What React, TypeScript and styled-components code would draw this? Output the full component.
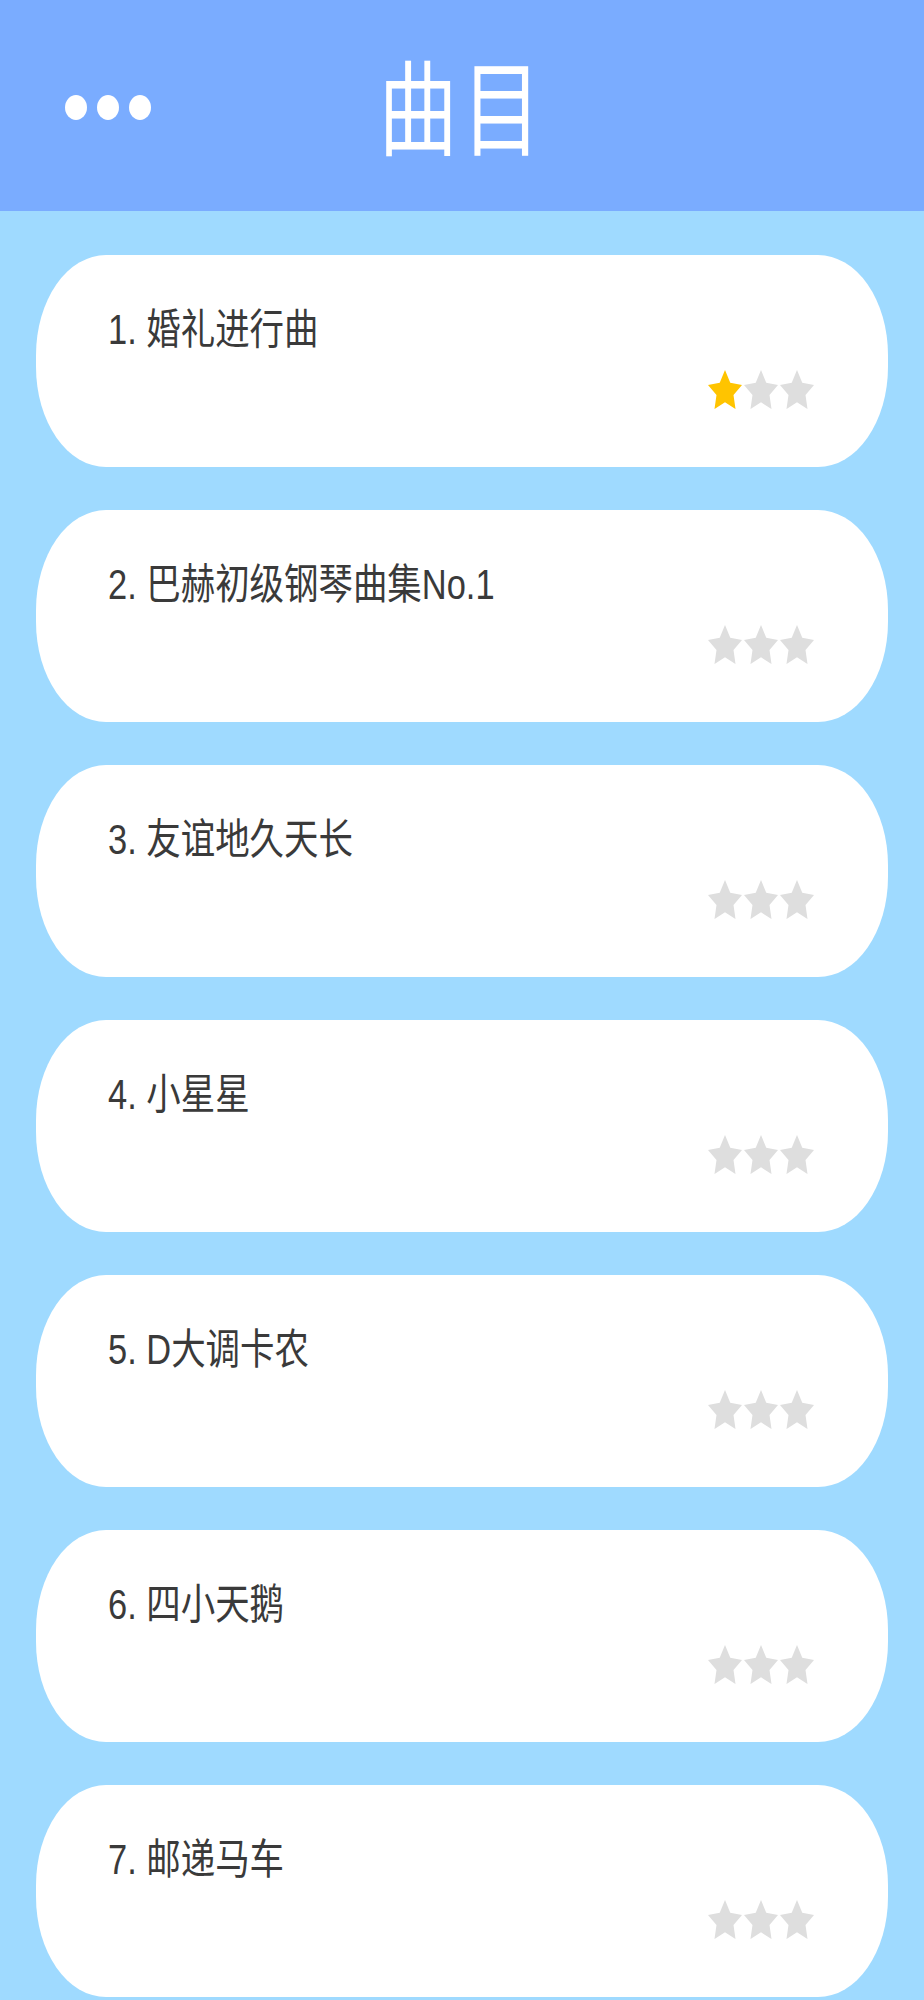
import styled, { createGlobalStyle } from "styled-components";

const songs = [
  { title: "1. 婚礼进行曲", stars: 1 },
  { title: "2. 巴赫初级钢琴曲集No.1", stars: 0 },
  { title: "3. 友谊地久天长", stars: 0 },
  { title: "4. 小星星", stars: 0 },
  { title: "5. D大调卡农", stars: 0 },
  { title: "6. 四小天鹅", stars: 0 },
  { title: "7. 邮递马车", stars: 0 },
];

const GlobalStyle = createGlobalStyle`
  body {
    margin: 0;
    background: #9fdaff;
    font-family: "Liberation Sans", "Noto Sans CJK SC", sans-serif;
  }
`;

export default function App() {
  return (
    <Page>
      <GlobalStyle />
      <Header>
        <Dots>
          <Dot />
          <Dot />
          <Dot />
        </Dots>
        <Title>
          <span>曲目</span>
        </Title>
        <div />
      </Header>
      <List>
        {songs.map((s) => (
          <Card key={s.title}>
            <SongName>
              <span>{s.title}</span>
            </SongName>
            <Stars>
              {[0, 1, 2].map((i) => (
                <Star key={i} $on={i < s.stars} />
              ))}
            </Stars>
          </Card>
        ))}
      </List>
    </Page>
  );
}

function Star({ $on }: { $on: boolean }) {
  return (
    <StarIcon viewBox="2 2 20 19" preserveAspectRatio="none" $on={$on}>
      <path d="M12 2l3.09 6.26L22 9.27l-5 4.87 1.18 6.88L12 17.77l-6.18 3.25L7 14.14 2 9.27l6.91-1.01L12 2z" />
    </StarIcon>
  );
}

const Page = styled.div`
  min-height: 2000px;
  background: #9fdaff;
`;

const Header = styled.header`
  height: 211px;
  background: #7aacff;
  display: grid;
  grid-template-columns: 1fr auto 1fr;
  align-items: center;
`;

const Dots = styled.div`
  display: flex;
  gap: 10px;
  padding-left: 65px;
  padding-top: 4px;
`;

const Dot = styled.div`
  width: 22px;
  height: 25px;
  border-radius: 50%;
  background: #fff;
`;

const Title = styled.h1`
  margin: 0 0 6px;
  color: #fff;
  font-family: "Noto Sans CJK SC", sans-serif;
  font-weight: 400;
  font-size: 104px;
  line-height: 1;
  span {
    display: inline-block;
    transform: scaleX(0.76);
    letter-spacing: 6px;
  }
`;

const List = styled.main`
  display: flex;
  flex-direction: column;
  gap: 43px;
  padding: 44px 36px 0;
`;

const Card = styled.div`
  height: 212px;
  box-sizing: border-box;
  background: #fff;
  border-radius: 70px / 100px;
  padding: 52px 74px 0 72px;
  display: flex;
  flex-direction: column;
`;

const SongName = styled.div`
  font-size: 42px;
  line-height: 1.1;
  color: #3a3a3a;
  white-space: nowrap;
  span {
    display: inline-block;
    transform: scaleX(0.82);
    transform-origin: left center;
  }
`;

const Stars = styled.div`
  display: flex;
  justify-content: flex-end;
  gap: 2px;
  margin-top: 17px;
`;

const StarIcon = styled.svg<{ $on: boolean }>`
  width: 34px;
  height: 39px;
  fill: ${({ $on }) => ($on ? "#ffc400" : "#dedede")};
`;
